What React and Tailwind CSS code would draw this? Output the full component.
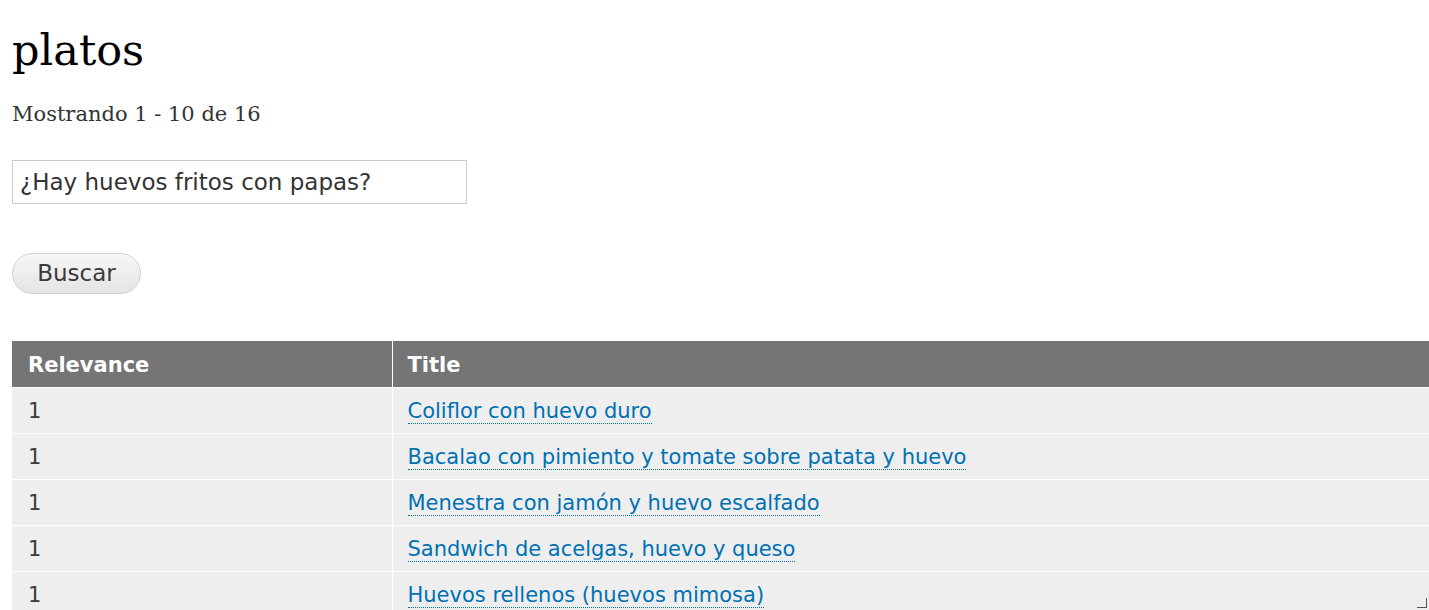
import React from 'react';

const rows = [
  'Coliflor con huevo duro',
  'Bacalao con pimiento y tomate sobre patata y huevo',
  'Menestra con jamón y huevo escalfado',
  'Sandwich de acelgas, huevo y queso',
  'Huevos rellenos (huevos mimosa)',
];

const sans = "font-['DejaVu_Sans',Verdana,sans-serif]";
const serif = "font-['DejaVu_Serif',Georgia,serif]";

export default function App() {
  return (
    <div className="relative h-[610px] overflow-hidden bg-white pl-3">
      <h1 className={`${serif} pt-[20px] text-[43px] leading-[60px] text-black`}>platos</h1>
      <p className={`${serif} mt-[19px] text-[21px] leading-[30px] text-[#333]`}>Mostrando 1 - 10 de 16</p>

      <input
        type="text"
        defaultValue="¿Hay huevos fritos con papas?"
        className={`${sans} mt-[31px] block h-[44px] w-[455px] border border-[#ccc] px-[7px] text-[23px] text-[#333] outline-none`}
      />

      <button
        className={`${sans} mt-[49px] block h-[41px] w-[129px] rounded-full border border-[#d0d0d0] bg-linear-to-b from-[#f7f7f7] to-[#e4e4e4] text-[23px] text-[#3a3a3a]`}
      >
        Buscar
      </button>

      <table className={`${sans} mt-[47px] w-full border-collapse text-[21px]`}>
        <thead>
          <tr className="h-[46px] bg-[#757575] text-white">
            <th className="w-[380px] border-r border-b border-white px-4 pt-[4px] text-left font-bold">Relevance</th>
            <th className="border-b border-white pt-[4px] pl-[15px] text-left font-bold">Title</th>
          </tr>
        </thead>
        <tbody>
          {rows.map((title) => (
            <tr key={title} className="h-[46px] bg-[#eeeeee]">
              <td className="border-r border-b border-white px-4 pt-[4px] text-[#3b3b3b]">1</td>
              <td className="border-b border-white pt-[4px] pl-[15px]">
                <a href="#" className="border-b border-dotted border-[#0071b3] text-[#0071b3] no-underline">
                  {title}
                </a>
              </td>
            </tr>
          ))}
        </tbody>
      </table>

      <div className="absolute right-[2px] bottom-[2px] h-[10px] w-[10px] border-r border-b border-[#555]" />
    </div>
  );
}
